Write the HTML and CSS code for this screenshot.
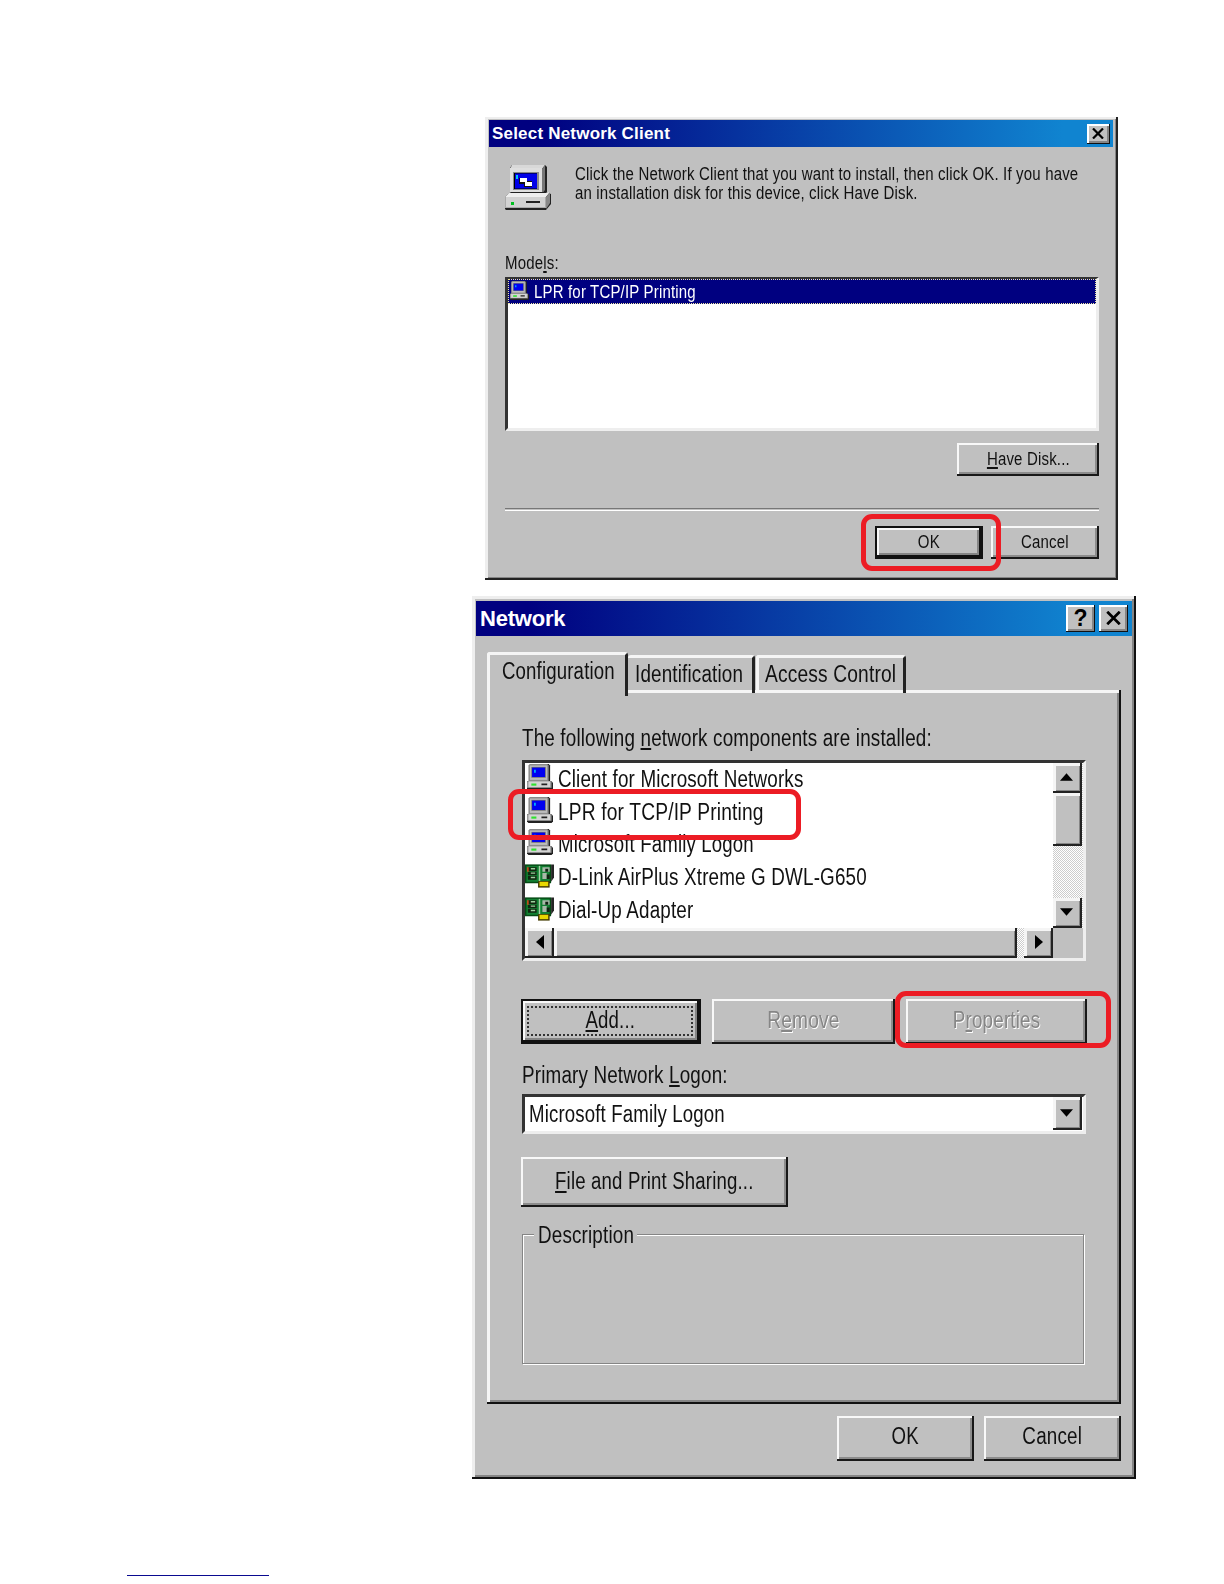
FILE: index.html
```html
<!DOCTYPE html>
<html lang="en">
<head>
    <meta charset="UTF-8">
    <meta name="viewport" content="width=device-width, initial-scale=1.0">
    <title>Network Client Setup</title>
    <link rel="stylesheet" href="styles.css">
</head>
<body>
    <svg class="sprite" aria-hidden="true">
        <symbol id="computer" viewBox="0 0 18 18">
            <path d="M2 0h13l1 1v11H2z" fill="#222"/>
            <path d="M1 1l1-1h12l1 1v11H1z" fill="#8a8a8a"/>
            <path d="M2 1h12v10H2z" fill="#bcbcbc"/>
            <path d="M3 2h10v7.500H3z" fill="#707070"/>
            <path d="M3.500 2.500h9v6.500h-9z" fill="#0000f0"/>
            <path d="M5 4h1v2H5z" fill="#00d8ff"/>
            <path d="M0 12h17l1 1v4l-1 1H1l-1-1z" fill="#222"/>
            <path d="M0 12h17v4.500H0z" fill="#999"/>
            <path d="M1 12h15v4H1z" fill="#d4d4d4"/>
            <path d="M3 13.500h3.500v1.500H3z" fill="#30e030"/>
            <path d="M10 13.500h4v1.200h-4z" fill="#222"/>
        </symbol>
        <symbol id="adapter" viewBox="0 0 20 16">
            <path d="M0 0h18v13H0z" fill="#054a14"/>
            <path d="M1 1h16v11H1z" fill="#128032"/>
            <path d="M2 2h6v2.500H2zM2 5h6v2.500H2zM2 8h6v2.500H2z" fill="#10240f"/>
            <path d="M4 2.500h3v1H4zM4 5.500h3v1H4zM4 8.500h3v1H4z" fill="#9fd09f"/>
            <path d="M1.500 2h1v3h-1z" fill="#e04a18"/>
            <path d="M9.500 1h1v11h-1z" fill="#a5d0a5"/>
            <path d="M12 2h5v3h-5zM12 6h3v4h-3z" fill="#a9b8a9"/>
            <path d="M14 3h2v2h-2zM15 7h2v3h-2z" fill="#102010"/>
            <path d="M18 0h2v9l-2 3z" fill="#252525"/>
            <path d="M9 11.500h8V16H9z" fill="#443b00"/>
            <path d="M10 12h6v3h-6z" fill="#e8d800"/>
        </symbol>
    </svg>

    <div class="dialog client-dialog">
        <div class="titlebar">
            <span class="title">Select Network Client</span>
            <button class="caption-btn" aria-label="Close">
                <svg viewBox="0 0 12 11"><path d="M1 0.5l10 10M11 0.5l-10 10"/></svg>
            </button>
        </div>
        <div class="intro">
            <svg class="intro-icon" viewBox="0 0 46 46">
                <path d="M7 1h33l2 2v25l-4 3H5V4z" fill="#222"/>
                <path d="M7 1h33l-3 4H5z" fill="#d8d8d8"/>
                <path d="M37 5l3-4v25l-3 4z" fill="#777"/>
                <path d="M5 4h32v25H5z" fill="#dedede"/>
                <path d="M8 8h26v18H8z" fill="#8a8a8a"/>
                <path d="M9 9h23v16H9z" fill="#000"/>
                <path d="M10 9.500h22v15H10z" fill="#0000e8"/>
                <path d="M11 11h2v4h-2z" fill="#00c8f0"/>
                <path d="M14 14h8v6h-8zM19 17h8v6h-8z" fill="#111"/>
                <path d="M15 14h7v4h-7zM20 18h7v4h-7z" fill="#fff"/>
                <path d="M3 30l3-2h34l6 2v10l-5 6H1l-1-1V33z" fill="#222"/>
                <path d="M0 33l4-4h37l4-1-4 5z" fill="#eee"/>
                <path d="M41 33l4-5v11l-4 6z" fill="#888"/>
                <path d="M0 33h41v11H0z" fill="#aaa"/>
                <path d="M1 33h39v10H1z" fill="#d2d2d2"/>
                <path d="M6 38h3v3H6z" fill="#00c020"/>
                <path d="M21 37h14v2H21z" fill="#222"/>
            </svg>
            <p class="intro-text text">Click the Network Client that you want to install, then click OK. If you have<br>an installation disk for this device, click Have Disk.</p>
        </div>
        <div class="models-label"><span class="text">Mode<u>l</u>s:</span></div>
        <div class="model-list sunken">
            <div class="model-row">
                <svg class="model-icon"><use href="#computer"/></svg>
                <span class="text">LPR for TCP/IP Printing</span>
            </div>
        </div>
        <div class="disk-row">
            <button class="btn disk-btn"><span class="text"><u>H</u>ave Disk...</span></button>
        </div>
        <div class="divider"></div>
        <div class="client-actions">
            <button class="btn default"><span class="text">OK</span></button>
            <button class="btn"><span class="text">Cancel</span></button>
        </div>
        <div class="mark mark-ok"></div>
    </div>

    <div class="dialog network-dialog">
        <div class="titlebar">
            <span class="title">Network</span>
            <button class="caption-btn help" aria-label="Help">?</button>
            <button class="caption-btn" aria-label="Close">
                <svg viewBox="0 0 12 11"><path d="M1 0.5l10 10M11 0.5l-10 10"/></svg>
            </button>
        </div>
        <div class="tabs">
            <div class="tab active"><span class="text slim">Configuration</span></div>
            <div class="tab tab-ident"><span class="text">Identification</span></div>
            <div class="tab tab-access"><span class="text wide">Access Control</span></div>
        </div>
        <div class="panel">
            <div class="components-label"><span class="text">The following <u>n</u>etwork components are installed:</span></div>
            <div class="component-list sunken">
                <div class="components">
                    <div class="component"><svg class="pc"><use href="#computer"/></svg><span class="text">Client for Microsoft Networks</span></div>
                    <div class="component"><svg class="pc"><use href="#computer"/></svg><span class="text wide">LPR for TCP/IP Printing</span></div>
                    <div class="component"><svg class="pc"><use href="#computer"/></svg><span class="text slim">Microsoft Family Logon</span></div>
                    <div class="component"><svg class="card"><use href="#adapter"/></svg><span class="text">D-Link AirPlus Xtreme G DWL-G650</span></div>
                    <div class="component"><svg class="card"><use href="#adapter"/></svg><span class="text">Dial-Up Adapter</span></div>
                </div>
                <div class="vscroll">
                    <div class="scroll-btn"><svg viewBox="0 0 14 8"><path d="M7 0l7 8H0z"/></svg></div>
                    <div class="vthumb"></div>
                    <div class="scroll-btn end"><svg viewBox="0 0 14 8"><path d="M0 0h14L7 8z"/></svg></div>
                </div>
                <div class="hscroll">
                    <div class="scroll-btn"><svg class="side" viewBox="0 0 8 14"><path d="M8 0v14L0 7z"/></svg></div>
                    <div class="hthumb"></div>
                    <div class="scroll-btn end"><svg class="side" viewBox="0 0 8 14"><path d="M0 0l8 7-8 7z"/></svg></div>
                </div>
            </div>
            <div class="component-actions">
                <button class="btn default add-btn"><span class="focus"><span class="text slim"><u>A</u>dd...</span></span></button>
                <button class="btn remove-btn" disabled><span class="text wide">R<u>e</u>move</span></button>
                <button class="btn props-btn" disabled><span class="text">P<u>r</u>operties</span></button>
            </div>
            <div class="logon-label"><span class="text">Primary Network <u>L</u>ogon:</span></div>
            <div class="combo sunken">
                <span class="text slim">Microsoft Family Logon</span>
                <div class="scroll-btn"><svg viewBox="0 0 14 8"><path d="M0 0h14L7 8z"/></svg></div>
            </div>
            <button class="btn share-btn"><span class="text slim"><u>F</u>ile and Print Sharing...</span></button>
            <div class="description">
                <div class="legend"><span class="text">Description</span></div>
            </div>
        </div>
        <div class="network-actions">
            <button class="btn"><span class="text slim">OK</span></button>
            <button class="btn"><span class="text">Cancel</span></button>
        </div>
        <div class="mark mark-lpr"></div>
        <div class="mark mark-props"></div>
    </div>

    <a class="footer-link" href="#" aria-label="Footer link"></a>
</body>
</html>
```
FILE: styles.css
```css
* {
    margin: 0;
    padding: 0;
    box-sizing: border-box;
}

body {
    width: 1224px;
    height: 1584px;
    padding-top: 117px;
    overflow: hidden;
    background: #fff;
    color: #111;
    font-family: "Liberation Sans", Arial, sans-serif;
}

.sprite {
    position: absolute;
    width: 0;
    height: 0;
}

u {
    text-underline-offset: 2px;
    text-decoration-thickness: 1.5px;
}

.dialog {
    position: relative;
    background: #c0c0c0;
    white-space: nowrap;
}

/* Condensed dialog lettering */
.text {
    display: inline-block;
    transform: scaleX(0.857);
    transform-origin: left;
}

.btn .text {
    transform-origin: center;
}

.network-dialog .text {
    transform: scaleX(0.802);
}

.network-dialog .text.wide {
    transform: scaleX(0.816);
}

.network-dialog .text.slim {
    transform: scaleX(0.792);
}

.titlebar {
    display: flex;
    align-items: center;
    background: linear-gradient(90deg, #000080 8%, #0842a8 50%, #1084d0 92%);
    color: #fff;
    font-weight: bold;
}

.title {
    flex: 1;
}

.caption-btn {
    display: flex;
    align-items: center;
    justify-content: center;
    border: 0;
    background: #c0c0c0;
    color: #000;
    box-shadow: inset -1px -1px #111, inset 2px 2px #fff, inset -3px -3px #858585;
}

.caption-btn svg {
    margin: 0 1px 1px 0;
    fill: none;
    stroke: #000;
    stroke-width: 2.2;
}

.sunken {
    background: #fff;
    border: 3px solid;
    border-color: #333 #eee #eee #333;
}

.btn {
    display: flex;
    align-items: center;
    justify-content: center;
    border: 0;
    background: #c0c0c0;
    color: #111;
    font: inherit;
    letter-spacing: inherit;
    box-shadow: inset -2px -2px #181818, inset 2px 2px #f8f8f8, inset -4px -4px #8c8c8c;
}

.btn.default {
    border: 2px solid #111;
    box-shadow: inset -2px -2px #111, inset 2px 2px #f8f8f8, inset -4px -4px #858585;
}

.btn:disabled {
    color: #868686;
    text-shadow: 1px 1px #fff;
}

.mark {
    position: absolute;
    border: 5px solid #ec1c24;
    border-radius: 11px;
}

/* Select Network Client */

.client-dialog {
    width: 633px;
    height: 463px;
    margin-left: 485px;
    padding: 3px 5px 0 4px;
    font-size: 17.5px;
    letter-spacing: 0.2px;
    box-shadow: inset -2px -2px #222, inset 3px 2px #eee, inset -3px -3px #858585;
}

.client-dialog .titlebar {
    height: 27px;
    padding: 0 3px 0 3px;
    font-size: 17px;
}

.client-dialog .caption-btn {
    width: 23px;
    height: 20px;
}

.client-dialog .caption-btn svg {
    width: 12px;
    height: 11px;
}

.intro {
    display: flex;
    height: 104px;
    padding: 17px 0 0 16px;
}

.intro-icon {
    flex: none;
    width: 46px;
    height: 46px;
    margin-right: 24px;
}

.intro-text {
    height: 38px;
    margin-top: 1px;
    line-height: 19px;
}

.models-label {
    height: 26px;
    padding-left: 16px;
    line-height: 25px;
}

.model-list {
    width: 594px;
    height: 154px;
    margin-left: 16px;
    border-top-width: 2px;
}

.model-row {
    display: flex;
    align-items: center;
    height: 25px;
    background: #000080;
    border: 1px dotted #f0e8a0;
    color: #fff;
}

.model-row .text {
    padding-top: 2px;
}

.model-icon {
    width: 19px;
    height: 19px;
    margin: 0 5px 2px 1px;
}

.disk-row {
    display: flex;
    justify-content: flex-end;
    padding: 12px 14px 0 0;
}

.disk-btn {
    width: 142px;
    height: 33px;
}

.divider {
    width: 594px;
    height: 3px;
    margin: 32px 0 0 16px;
    border-top: 1px solid #777;
    border-bottom: 1px solid #fff;
}

.client-actions {
    display: flex;
    justify-content: flex-end;
    gap: 8px;
    padding: 15px 14px 0 0;
}

.client-actions .btn {
    width: 108px;
    height: 33px;
}

.mark-ok {
    left: 376px;
    top: 397px;
    width: 140px;
    height: 57px;
}

/* Network */

.network-dialog {
    width: 664px;
    height: 883px;
    margin: 16px 0 0 472px;
    padding: 5px 4px 0 4px;
    font-size: 23.5px;
    letter-spacing: 0.2px;
    box-shadow: inset -2px -2px #111, inset 3px 3px #eee, inset -4px -4px #858585;
}

.network-dialog .titlebar {
    height: 35px;
    padding: 0 4px 0 4px;
    font-size: 22px;
    letter-spacing: -0.2px;
}

.network-dialog .caption-btn {
    width: 29px;
    height: 27px;
}

.network-dialog .caption-btn svg {
    width: 15px;
    height: 14px;
}

.caption-btn.help {
    margin-right: 4px;
    font: bold 23px "Liberation Sans", Arial, sans-serif;
}

.tabs {
    display: flex;
    align-items: flex-end;
    height: 57px;
    padding: 13px 0 0 11px;
}

.tab {
    height: 38px;
    padding-left: 7px;
    border-top: 3px solid #f5f5f5;
    border-right: 3px solid #222;
    border-radius: 3px 3px 0 0;
    line-height: 32px;
}

.tab.active {
    position: relative;
    width: 141px;
    height: 44px;
    margin-bottom: -3px;
    padding-left: 12px;
    background: #c0c0c0;
    border-left: 3px solid #f5f5f5;
    line-height: 32px;
}

.tab-ident {
    width: 127px;
}

.tab-access {
    width: 150px;
    margin-left: 1px;
    padding-left: 6px;
    border-left: 3px solid #f5f5f5;
}

.panel {
    width: 634px;
    height: 714px;
    margin: -3px 0 0 11px;
    padding: 33px 0 0 34px;
    box-shadow: inset -2px -2px #111, inset 3px 3px #f5f5f5, inset -4px -4px #858585;
}

.components-label {
    height: 37px;
    padding-left: 1px;
    line-height: 30px;
}

.component-list {
    display: grid;
    grid-template: 165px 30px / 1fr 30px;
    width: 564px;
    height: 201px;
    margin: 0 0 38px 1px;
    background: #c0c0c0;
}

.components {
    overflow: hidden;
    background: #fff;
}

.component {
    display: flex;
    align-items: center;
    height: 32.6px;
    line-height: 32px;
}

.component .pc {
    flex: none;
    width: 26px;
    height: 26px;
    margin: 0 5px 4px 2px;
}

.component .card {
    flex: none;
    width: 29px;
    height: 24px;
    margin: 0 4px 2px 0;
}

.vscroll,
.hscroll {
    display: flex;
    background: repeating-conic-gradient(#fff 0 25%, #ccc 0 50%) 0 0 / 2px 2px;
}

.vscroll {
    flex-direction: column;
}

.scroll-btn {
    display: flex;
    align-items: center;
    justify-content: center;
    flex: none;
    width: 29px;
    height: 30px;
}

.scroll-btn,
.vthumb,
.hthumb {
    background: #c0c0c0;
    box-shadow: inset -2px -2px #222, inset 3px 3px #f5f5f5, inset -3px -3px #858585;
}

.scroll-btn.end {
    margin-top: auto;
}

.scroll-btn svg {
    width: 13px;
    height: 8px;
    margin: 0 2px 2px 0;
    fill: #000;
}

.scroll-btn svg.side {
    width: 8px;
    height: 14px;
    margin: 0 0 2px 0;
}

.vthumb {
    width: 29px;
    height: 53px;
}

.hthumb {
    width: 463px;
}

.hscroll .end {
    margin: 0 0 0 auto;
}

.component-actions {
    display: flex;
    height: 45px;
}

.component-actions .btn {
    width: 181px;
    height: 45px;
    padding-bottom: 2px;
}

.component-actions .add-btn {
    width: 180px;
    margin-right: 1px;
    padding: 0 2px 2px 0;
}

.focus {
    width: 166px;
    height: 30px;
    border: 2px dotted #333;
    line-height: 25px;
}

.component-actions .remove-btn {
    width: 183px;
    margin: 0 11px 0 10px;
}

.logon-label {
    height: 50px;
    padding: 16px 0 0 1px;
    line-height: 30px;
}

.combo {
    display: flex;
    justify-content: space-between;
    width: 564px;
    height: 40px;
    margin: 0 0 23px 1px;
    padding: 0 1px 0 4px;
    line-height: 34px;
}

.combo .scroll-btn {
    height: 33px;
}

.share-btn {
    width: 267px;
    height: 50px;
    padding-bottom: 2px;
}

.description {
    width: 562px;
    height: 130px;
    margin: 27px 0 0 1px;
    border: 1px solid #858585;
    box-shadow: 1px 1px #fff, inset 1px 1px #fff;
}

.legend {
    width: 103px;
    height: 30px;
    margin: -15px 0 0 11px;
    padding-left: 4px;
    background: #c0c0c0;
    line-height: 30px;
}

.network-actions {
    display: flex;
    justify-content: flex-end;
    gap: 10px;
    padding: 12px 11px 0 0;
}

.network-actions .btn {
    width: 137px;
    height: 45px;
    padding-bottom: 4px;
}

.mark-lpr {
    left: 36px;
    top: 193px;
    width: 293px;
    height: 51px;
}

.mark-props {
    left: 423px;
    top: 395px;
    width: 216px;
    height: 57px;
}

.footer-link {
    display: block;
    width: 142px;
    height: 1px;
    margin: 96px 0 0 127px;
    background: #0a0a90;
}
```
